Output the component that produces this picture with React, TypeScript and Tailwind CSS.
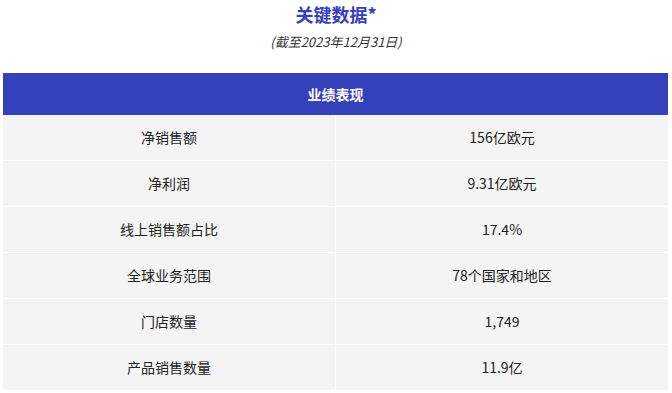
const rows: [string, string][] = [
  ['净销售额', '156亿欧元'],
  ['净利润', '9.31亿欧元'],
  ['线上销售额占比', '17.4%'],
  ['全球业务范围', '78个国家和地区'],
  ['门店数量', '1,749'],
  ['产品销售数量', '11.9亿'],
];

export default function App() {
  return (
    <div
      className="w-[672px] h-[393px] bg-white overflow-hidden"
      style={{ fontFamily: '"Microsoft YaHei", "Noto Sans CJK SC", "Noto Sans", sans-serif' }}
    >
      {/* Title */}
      <div className="h-[28px] flex items-center justify-center text-[18px] font-bold text-[#3640bd]">
        关键数据*
      </div>
      <div className="h-[28px] flex items-center justify-center text-[13px] italic text-[#333]">
        (截至2023年12月31日)
      </div>

      {/* Table */}
      <div className="mt-[17px] ml-[3px] w-[665px]">
        <div className="h-[42px] bg-[#3441bb] flex items-center justify-center text-[14px] font-bold text-white">
          业绩表现
        </div>
        {rows.map(([label, value]) => (
          <div key={label} className="grid grid-cols-[332px_1px_332px] h-[46px] border-b border-white">
            <div className="bg-[#f4f4f4] flex items-center justify-center text-[14px] text-[#222]">
              {label}
            </div>
            <div className="bg-white" />
            <div className="bg-[#f4f4f4] flex items-center justify-center text-[14px] text-[#222]">
              {value}
            </div>
          </div>
        ))}
      </div>
    </div>
  );
}
